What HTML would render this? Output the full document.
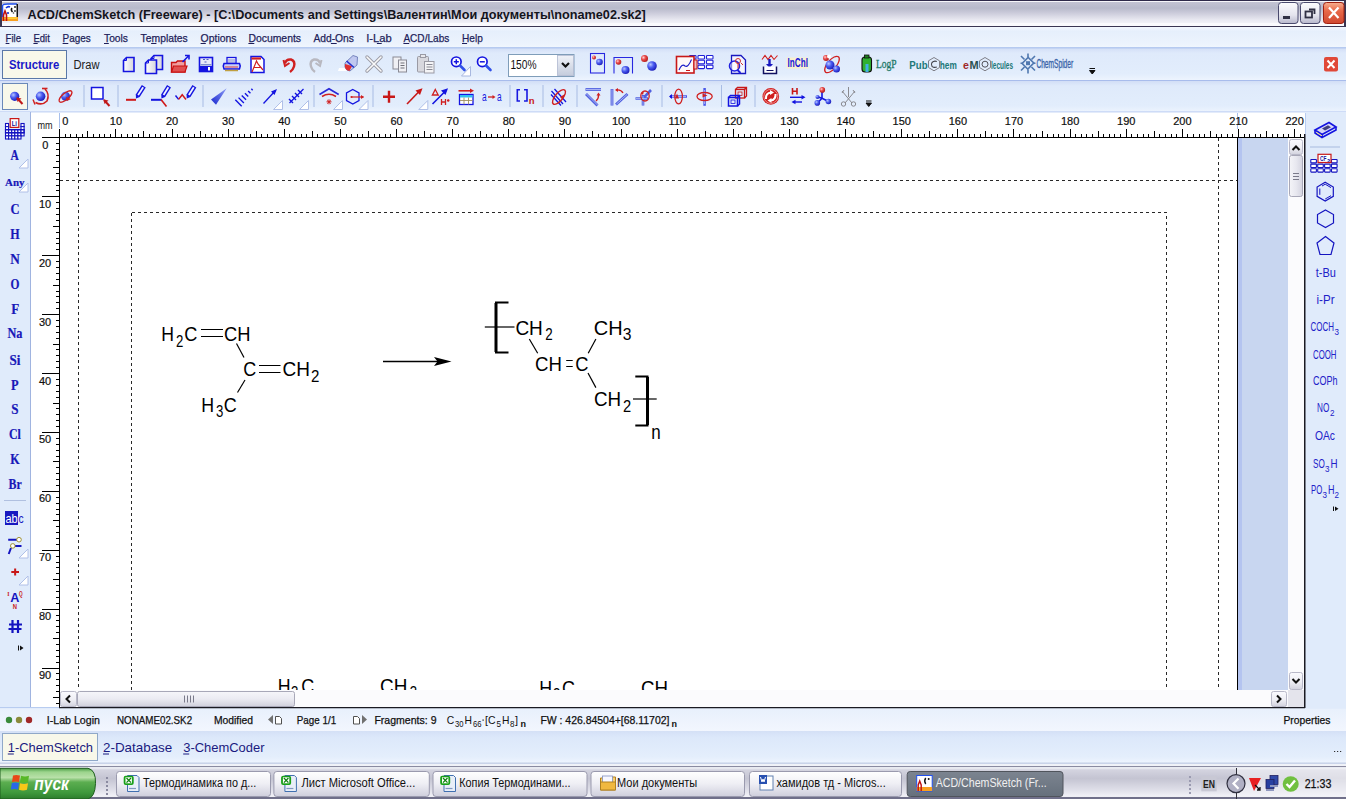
<!DOCTYPE html><html><head><meta charset="utf-8"><style>
*{margin:0;padding:0}
html,body{width:1346px;height:799px;overflow:hidden;background:#dce8fa}
svg{position:absolute;left:0;top:0;display:block}
text{white-space:pre}
</style></head><body>
<svg width="1346" height="799" viewBox="0 0 1346 799">
<defs>
<linearGradient id="gTitle" x1="0" y1="0" x2="0" y2="1">
 <stop offset="0" stop-color="#c6c6d6"/><stop offset="0.3" stop-color="#b8bacb"/><stop offset="0.45" stop-color="#c8c8d8"/><stop offset="0.75" stop-color="#eaeaf2"/><stop offset="1" stop-color="#fcfcfe"/>
</linearGradient>
<linearGradient id="gMenu" x1="0" y1="0" x2="0" y2="1">
 <stop offset="0" stop-color="#f4f8fe"/><stop offset="0.2" stop-color="#e6effc"/><stop offset="0.8" stop-color="#ecf3fd"/><stop offset="1" stop-color="#f2f7fe"/>
</linearGradient>
<linearGradient id="gTb" x1="0" y1="0" x2="0" y2="1">
 <stop offset="0" stop-color="#d2def6"/><stop offset="0.16" stop-color="#dfeafb"/><stop offset="0.8" stop-color="#e2edfc"/><stop offset="1" stop-color="#edf4fe"/>
</linearGradient>
<linearGradient id="gTask" x1="0" y1="0" x2="0" y2="1">
 <stop offset="0" stop-color="#fafafc"/><stop offset="0.08" stop-color="#d4d4e0"/><stop offset="0.35" stop-color="#c4c4d2"/><stop offset="0.7" stop-color="#dedee8"/><stop offset="0.9" stop-color="#f0f0f6"/><stop offset="1" stop-color="#e8e8f0"/>
</linearGradient>
<linearGradient id="gBtn" x1="0" y1="0" x2="0" y2="1">
 <stop offset="0" stop-color="#ffffff"/><stop offset="0.5" stop-color="#eeeef4"/><stop offset="1" stop-color="#cfcfdc"/>
</linearGradient>
<linearGradient id="gStart" x1="0" y1="0" x2="0" y2="1">
 <stop offset="0" stop-color="#4a9c44"/><stop offset="0.12" stop-color="#9cd48c"/><stop offset="0.3" stop-color="#b8e0a8"/><stop offset="0.45" stop-color="#5cae50"/><stop offset="0.8" stop-color="#3e983c"/><stop offset="1" stop-color="#2c7c2c"/>
</linearGradient>
<linearGradient id="gThumbV" x1="0" y1="0" x2="1" y2="0">
 <stop offset="0" stop-color="#f4f4f8"/><stop offset="0.5" stop-color="#e8e8f0"/><stop offset="1" stop-color="#d4d4e0"/>
</linearGradient>
<linearGradient id="gThumbH" x1="0" y1="0" x2="0" y2="1">
 <stop offset="0" stop-color="#f6f6fa"/><stop offset="0.5" stop-color="#ebebf2"/><stop offset="1" stop-color="#d0d0dc"/>
</linearGradient>
<linearGradient id="gSbBtn" x1="0" y1="0" x2="0" y2="1">
 <stop offset="0" stop-color="#fafafe"/><stop offset="0.55" stop-color="#eeeef4"/><stop offset="1" stop-color="#d2d2de"/>
</linearGradient>
<linearGradient id="gStatus" x1="0" y1="0" x2="0" y2="1">
 <stop offset="0" stop-color="#e8f0fc"/><stop offset="1" stop-color="#f2f6fe"/>
</linearGradient>
<linearGradient id="gTabs" x1="0" y1="0" x2="0" y2="1">
 <stop offset="0" stop-color="#d4e0f6"/><stop offset="0.2" stop-color="#dce8fa"/><stop offset="0.8" stop-color="#e4eefc"/><stop offset="1" stop-color="#eef4fe"/>
</linearGradient>
<linearGradient id="gActive" x1="0" y1="0" x2="0" y2="1">
 <stop offset="0" stop-color="#7c8490"/><stop offset="1" stop-color="#66707c"/>
</linearGradient>
</defs>
<rect x="0" y="0" width="1346" height="27" fill="url(#gTitle)"/>
<rect x="0" y="0" width="1346" height="1" fill="#2e2a4a"/>
<rect x="0" y="1" width="1346" height="1" fill="#f6f6fa"/>
<rect x="0" y="23" width="1346" height="3" fill="#fafafd"/>
<rect x="0" y="26" width="1346" height="1" fill="#3a3652"/>
<rect x="0" y="0" width="2" height="27" fill="#3a3652"/>
<rect x="1344" y="0" width="2" height="27" fill="#3a3652"/>
<text x="27.50" y="19.00" font-family="Liberation Sans" font-size="13" font-weight="bold" font-style="normal" fill="#14141c" textLength="618.32" lengthAdjust="spacingAndGlyphs">ACD/ChemSketch (Freeware) - [C:\Documents and Settings\Валентин\Мои документы\noname02.sk2]</text>
<rect x="0" y="27" width="1346" height="21" fill="url(#gMenu)"/>
<rect x="0" y="47" width="1346" height="1" fill="#b8ccf0"/>
<text x="5.60" y="42.00" font-family="Liberation Sans" font-size="11.5" font-weight="normal" font-style="normal" fill="#1e1e5a" textLength="15.53" lengthAdjust="spacingAndGlyphs" stroke="#1e1e5a" stroke-width="0.25">File</text>
<text x="33.40" y="42.00" font-family="Liberation Sans" font-size="11.5" font-weight="normal" font-style="normal" fill="#1e1e5a" textLength="16.43" lengthAdjust="spacingAndGlyphs" stroke="#1e1e5a" stroke-width="0.25">Edit</text>
<text x="62.60" y="42.00" font-family="Liberation Sans" font-size="11.5" font-weight="normal" font-style="normal" fill="#1e1e5a" textLength="28.18" lengthAdjust="spacingAndGlyphs" stroke="#1e1e5a" stroke-width="0.25">Pages</text>
<text x="104.00" y="42.00" font-family="Liberation Sans" font-size="11.5" font-weight="normal" font-style="normal" fill="#1e1e5a" textLength="23.98" lengthAdjust="spacingAndGlyphs" stroke="#1e1e5a" stroke-width="0.25">Tools</text>
<text x="140.60" y="42.00" font-family="Liberation Sans" font-size="11.5" font-weight="normal" font-style="normal" fill="#1e1e5a" textLength="47.17" lengthAdjust="spacingAndGlyphs" stroke="#1e1e5a" stroke-width="0.25">Templates</text>
<text x="200.60" y="42.00" font-family="Liberation Sans" font-size="11.5" font-weight="normal" font-style="normal" fill="#1e1e5a" textLength="35.97" lengthAdjust="spacingAndGlyphs" stroke="#1e1e5a" stroke-width="0.25">Options</text>
<text x="248.40" y="42.00" font-family="Liberation Sans" font-size="11.5" font-weight="normal" font-style="normal" fill="#1e1e5a" textLength="52.67" lengthAdjust="spacingAndGlyphs" stroke="#1e1e5a" stroke-width="0.25">Documents</text>
<text x="313.40" y="42.00" font-family="Liberation Sans" font-size="11.5" font-weight="normal" font-style="normal" fill="#1e1e5a" textLength="40.58" lengthAdjust="spacingAndGlyphs" stroke="#1e1e5a" stroke-width="0.25">Add-Ons</text>
<text x="366.22" y="42.00" font-family="Liberation Sans" font-size="11.5" font-weight="normal" font-style="normal" fill="#1e1e5a" textLength="25.56" lengthAdjust="spacingAndGlyphs" stroke="#1e1e5a" stroke-width="0.25">I-Lab</text>
<text x="403.40" y="42.00" font-family="Liberation Sans" font-size="11.5" font-weight="normal" font-style="normal" fill="#1e1e5a" textLength="45.88" lengthAdjust="spacingAndGlyphs" stroke="#1e1e5a" stroke-width="0.25">ACD/Labs</text>
<text x="462.00" y="42.00" font-family="Liberation Sans" font-size="11.5" font-weight="normal" font-style="normal" fill="#1e1e5a" textLength="20.75" lengthAdjust="spacingAndGlyphs" stroke="#1e1e5a" stroke-width="0.25">Help</text>
<rect x="5.6" y="43" width="3.8" height="1" fill="#1e1e5a"/>
<rect x="33.4" y="43" width="4.3" height="1" fill="#1e1e5a"/>
<rect x="62.6" y="43" width="5.7" height="1" fill="#1e1e5a"/>
<rect x="104.0" y="43" width="4.8" height="1" fill="#1e1e5a"/>
<rect x="151.1" y="43" width="5.3" height="1" fill="#1e1e5a"/>
<rect x="200.6" y="43" width="5.2" height="1" fill="#1e1e5a"/>
<rect x="248.4" y="43" width="5.9" height="1" fill="#1e1e5a"/>
<rect x="330.9" y="43" width="5.8" height="1" fill="#1e1e5a"/>
<rect x="376.9" y="43" width="4.8" height="1" fill="#1e1e5a"/>
<rect x="403.4" y="43" width="5.8" height="1" fill="#1e1e5a"/>
<rect x="462.0" y="43" width="5.1" height="1" fill="#1e1e5a"/>
<rect x="0" y="48" width="1346" height="32" fill="url(#gTb)"/>
<rect x="0" y="47.5" width="1346" height="1" fill="#b4c8f0"/>
<rect x="0" y="80" width="1346" height="1" fill="#a8bcec"/>
<rect x="0" y="81" width="1346" height="31" fill="url(#gTb)"/>
<rect x="0" y="111.5" width="1346" height="1" fill="#b0c4f0"/>
<rect x="2.5" y="50.5" width="64" height="28" fill="#f8f8ea" stroke="#5a78a8" stroke-width="1"/>
<text x="9.00" y="68.60" font-family="Liberation Sans" font-size="12" font-weight="bold" font-style="normal" fill="#1818c8" textLength="50.29" lengthAdjust="spacingAndGlyphs">Structure</text>
<text x="73.50" y="68.60" font-family="Liberation Sans" font-size="12" font-weight="normal" font-style="normal" fill="#202020" textLength="25.99" lengthAdjust="spacingAndGlyphs">Draw</text>
<rect x="2.5" y="83.5" width="25" height="26" fill="#f8f8ea" stroke="#6a88b8" stroke-width="1"/>
<rect x="0" y="112" width="30" height="595" fill="#e0ebfb"/>
<rect x="30" y="112" width="1" height="596" fill="#a0b4e0"/>
<rect x="1305" y="112" width="41" height="596" fill="#e0ebfb"/>
<rect x="31" y="112.5" width="1274" height="25" fill="#ffffff"/>
<rect x="31" y="137" width="28" height="570" fill="#ffffff"/>
<rect x="59" y="113" width="1" height="15" fill="#a8c0ec"/>
<rect x="1237" y="113" width="1" height="16" fill="#a8c0ec"/>
<text x="37.50" y="128.50" font-family="Liberation Sans" font-size="11" font-weight="normal" font-style="normal" fill="#202020" textLength="15.13" lengthAdjust="spacingAndGlyphs">mm</text>
<text x="62.30" y="125.00" font-family="Liberation Sans" font-size="11" font-weight="normal" font-style="normal" fill="#101010" stroke="#101010" stroke-width="0.2">0</text>
<text x="109.77" y="125.00" font-family="Liberation Sans" font-size="11" font-weight="normal" font-style="normal" fill="#101010" stroke="#101010" stroke-width="0.2">10</text>
<text x="165.90" y="125.00" font-family="Liberation Sans" font-size="11" font-weight="normal" font-style="normal" fill="#101010" stroke="#101010" stroke-width="0.2">20</text>
<text x="222.03" y="125.00" font-family="Liberation Sans" font-size="11" font-weight="normal" font-style="normal" fill="#101010" stroke="#101010" stroke-width="0.2">30</text>
<text x="278.16" y="125.00" font-family="Liberation Sans" font-size="11" font-weight="normal" font-style="normal" fill="#101010" stroke="#101010" stroke-width="0.2">40</text>
<text x="334.29" y="125.00" font-family="Liberation Sans" font-size="11" font-weight="normal" font-style="normal" fill="#101010" stroke="#101010" stroke-width="0.2">50</text>
<text x="390.42" y="125.00" font-family="Liberation Sans" font-size="11" font-weight="normal" font-style="normal" fill="#101010" stroke="#101010" stroke-width="0.2">60</text>
<text x="446.55" y="125.00" font-family="Liberation Sans" font-size="11" font-weight="normal" font-style="normal" fill="#101010" stroke="#101010" stroke-width="0.2">70</text>
<text x="502.68" y="125.00" font-family="Liberation Sans" font-size="11" font-weight="normal" font-style="normal" fill="#101010" stroke="#101010" stroke-width="0.2">80</text>
<text x="558.81" y="125.00" font-family="Liberation Sans" font-size="11" font-weight="normal" font-style="normal" fill="#101010" stroke="#101010" stroke-width="0.2">90</text>
<text x="611.88" y="125.00" font-family="Liberation Sans" font-size="11" font-weight="normal" font-style="normal" fill="#101010" stroke="#101010" stroke-width="0.2">100</text>
<text x="668.42" y="125.00" font-family="Liberation Sans" font-size="11" font-weight="normal" font-style="normal" fill="#101010" stroke="#101010" stroke-width="0.2">110</text>
<text x="724.14" y="125.00" font-family="Liberation Sans" font-size="11" font-weight="normal" font-style="normal" fill="#101010" stroke="#101010" stroke-width="0.2">120</text>
<text x="780.27" y="125.00" font-family="Liberation Sans" font-size="11" font-weight="normal" font-style="normal" fill="#101010" stroke="#101010" stroke-width="0.2">130</text>
<text x="836.40" y="125.00" font-family="Liberation Sans" font-size="11" font-weight="normal" font-style="normal" fill="#101010" stroke="#101010" stroke-width="0.2">140</text>
<text x="892.53" y="125.00" font-family="Liberation Sans" font-size="11" font-weight="normal" font-style="normal" fill="#101010" stroke="#101010" stroke-width="0.2">150</text>
<text x="948.66" y="125.00" font-family="Liberation Sans" font-size="11" font-weight="normal" font-style="normal" fill="#101010" stroke="#101010" stroke-width="0.2">160</text>
<text x="1004.79" y="125.00" font-family="Liberation Sans" font-size="11" font-weight="normal" font-style="normal" fill="#101010" stroke="#101010" stroke-width="0.2">170</text>
<text x="1060.92" y="125.00" font-family="Liberation Sans" font-size="11" font-weight="normal" font-style="normal" fill="#101010" stroke="#101010" stroke-width="0.2">180</text>
<text x="1117.05" y="125.00" font-family="Liberation Sans" font-size="11" font-weight="normal" font-style="normal" fill="#101010" stroke="#101010" stroke-width="0.2">190</text>
<text x="1173.18" y="125.00" font-family="Liberation Sans" font-size="11" font-weight="normal" font-style="normal" fill="#101010" stroke="#101010" stroke-width="0.2">200</text>
<text x="1229.31" y="125.00" font-family="Liberation Sans" font-size="11" font-weight="normal" font-style="normal" fill="#101010" stroke="#101010" stroke-width="0.2">210</text>
<text x="1285.44" y="125.00" font-family="Liberation Sans" font-size="11" font-weight="normal" font-style="normal" fill="#101010" stroke="#101010" stroke-width="0.2">220</text>
<path d="M59.7 129V137 M65.3 134V137 M70.9 134V137 M76.5 134V137 M82.2 134V137 M87.8 131V137 M93.4 134V137 M99.0 134V137 M104.6 134V137 M110.2 134V137 M115.8 129V137 M121.4 134V137 M127.1 134V137 M132.7 134V137 M138.3 134V137 M143.9 131V137 M149.5 134V137 M155.1 134V137 M160.7 134V137 M166.3 134V137 M172.0 129V137 M177.6 134V137 M183.2 134V137 M188.8 134V137 M194.4 134V137 M200.0 131V137 M205.6 134V137 M211.3 134V137 M216.9 134V137 M222.5 134V137 M228.1 129V137 M233.7 134V137 M239.3 134V137 M244.9 134V137 M250.5 134V137 M256.2 131V137 M261.8 134V137 M267.4 134V137 M273.0 134V137 M278.6 134V137 M284.2 129V137 M289.8 134V137 M295.4 134V137 M301.1 134V137 M306.7 134V137 M312.3 131V137 M317.9 134V137 M323.5 134V137 M329.1 134V137 M334.7 134V137 M340.4 129V137 M346.0 134V137 M351.6 134V137 M357.2 134V137 M362.8 134V137 M368.4 131V137 M374.0 134V137 M379.6 134V137 M385.3 134V137 M390.9 134V137 M396.5 129V137 M402.1 134V137 M407.7 134V137 M413.3 134V137 M418.9 134V137 M424.5 131V137 M430.2 134V137 M435.8 134V137 M441.4 134V137 M447.0 134V137 M452.6 129V137 M458.2 134V137 M463.8 134V137 M469.4 134V137 M475.1 134V137 M480.7 131V137 M486.3 134V137 M491.9 134V137 M497.5 134V137 M503.1 134V137 M508.7 129V137 M514.4 134V137 M520.0 134V137 M525.6 134V137 M531.2 134V137 M536.8 131V137 M542.4 134V137 M548.0 134V137 M553.6 134V137 M559.3 134V137 M564.9 129V137 M570.5 134V137 M576.1 134V137 M581.7 134V137 M587.3 134V137 M592.9 131V137 M598.5 134V137 M604.2 134V137 M609.8 134V137 M615.4 134V137 M621.0 129V137 M626.6 134V137 M632.2 134V137 M637.8 134V137 M643.5 134V137 M649.1 131V137 M654.7 134V137 M660.3 134V137 M665.9 134V137 M671.5 134V137 M677.1 129V137 M682.7 134V137 M688.4 134V137 M694.0 134V137 M699.6 134V137 M705.2 131V137 M710.8 134V137 M716.4 134V137 M722.0 134V137 M727.6 134V137 M733.3 129V137 M738.9 134V137 M744.5 134V137 M750.1 134V137 M755.7 134V137 M761.3 131V137 M766.9 134V137 M772.6 134V137 M778.2 134V137 M783.8 134V137 M789.4 129V137 M795.0 134V137 M800.6 134V137 M806.2 134V137 M811.8 134V137 M817.5 131V137 M823.1 134V137 M828.7 134V137 M834.3 134V137 M839.9 134V137 M845.5 129V137 M851.1 134V137 M856.7 134V137 M862.4 134V137 M868.0 134V137 M873.6 131V137 M879.2 134V137 M884.8 134V137 M890.4 134V137 M896.0 134V137 M901.7 129V137 M907.3 134V137 M912.9 134V137 M918.5 134V137 M924.1 134V137 M929.7 131V137 M935.3 134V137 M940.9 134V137 M946.6 134V137 M952.2 134V137 M957.8 129V137 M963.4 134V137 M969.0 134V137 M974.6 134V137 M980.2 134V137 M985.8 131V137 M991.5 134V137 M997.1 134V137 M1002.7 134V137 M1008.3 134V137 M1013.9 129V137 M1019.5 134V137 M1025.1 134V137 M1030.7 134V137 M1036.4 134V137 M1042.0 131V137 M1047.6 134V137 M1053.2 134V137 M1058.8 134V137 M1064.4 134V137 M1070.0 129V137 M1075.7 134V137 M1081.3 134V137 M1086.9 134V137 M1092.5 134V137 M1098.1 131V137 M1103.7 134V137 M1109.3 134V137 M1114.9 134V137 M1120.6 134V137 M1126.2 129V137 M1131.8 134V137 M1137.4 134V137 M1143.0 134V137 M1148.6 134V137 M1154.2 131V137 M1159.8 134V137 M1165.5 134V137 M1171.1 134V137 M1176.7 134V137 M1182.3 129V137 M1187.9 134V137 M1193.5 134V137 M1199.1 134V137 M1204.8 134V137 M1210.4 131V137 M1216.0 134V137 M1221.6 134V137 M1227.2 134V137 M1232.8 134V137 M1238.4 129V137 M1244.0 134V137 M1249.7 134V137 M1255.3 134V137 M1260.9 134V137 M1266.5 131V137 M1272.1 134V137 M1277.7 134V137 M1283.3 134V137 M1288.9 134V137 M1294.6 129V137 M1300.2 134V137" stroke="#000" stroke-width="1" fill="none" shape-rendering="crispEdges"/>
<rect x="42" y="137" width="1263" height="1" fill="#000"/>
<rect x="59" y="129" width="1" height="578" fill="#000"/>
<text x="42.30" y="149.00" font-family="Liberation Sans" font-size="11" font-weight="normal" font-style="normal" fill="#101010" stroke="#101010" stroke-width="0.2">0</text>
<text x="39.00" y="207.80" font-family="Liberation Sans" font-size="11" font-weight="normal" font-style="normal" fill="#101010" stroke="#101010" stroke-width="0.2">10</text>
<text x="39.00" y="266.70" font-family="Liberation Sans" font-size="11" font-weight="normal" font-style="normal" fill="#101010" stroke="#101010" stroke-width="0.2">20</text>
<text x="39.00" y="325.60" font-family="Liberation Sans" font-size="11" font-weight="normal" font-style="normal" fill="#101010" stroke="#101010" stroke-width="0.2">30</text>
<text x="39.00" y="384.50" font-family="Liberation Sans" font-size="11" font-weight="normal" font-style="normal" fill="#101010" stroke="#101010" stroke-width="0.2">40</text>
<text x="39.00" y="443.40" font-family="Liberation Sans" font-size="11" font-weight="normal" font-style="normal" fill="#101010" stroke="#101010" stroke-width="0.2">50</text>
<text x="39.00" y="502.30" font-family="Liberation Sans" font-size="11" font-weight="normal" font-style="normal" fill="#101010" stroke="#101010" stroke-width="0.2">60</text>
<text x="39.00" y="561.20" font-family="Liberation Sans" font-size="11" font-weight="normal" font-style="normal" fill="#101010" stroke="#101010" stroke-width="0.2">70</text>
<text x="39.00" y="620.10" font-family="Liberation Sans" font-size="11" font-weight="normal" font-style="normal" fill="#101010" stroke="#101010" stroke-width="0.2">80</text>
<text x="39.00" y="679.00" font-family="Liberation Sans" font-size="11" font-weight="normal" font-style="normal" fill="#101010" stroke="#101010" stroke-width="0.2">90</text>
<path d="M42 137.9H59 M56 143.8H59 M56 149.7H59 M56 155.6H59 M56 161.5H59 M53 167.3H59 M56 173.2H59 M56 179.1H59 M56 185.0H59 M56 190.9H59 M42 196.8H59 M56 202.7H59 M56 208.6H59 M56 214.5H59 M56 220.4H59 M53 226.2H59 M56 232.1H59 M56 238.0H59 M56 243.9H59 M56 249.8H59 M42 255.7H59 M56 261.6H59 M56 267.5H59 M56 273.4H59 M56 279.3H59 M53 285.1H59 M56 291.0H59 M56 296.9H59 M56 302.8H59 M56 308.7H59 M42 314.6H59 M56 320.5H59 M56 326.4H59 M56 332.3H59 M56 338.2H59 M53 344.0H59 M56 349.9H59 M56 355.8H59 M56 361.7H59 M56 367.6H59 M42 373.5H59 M56 379.4H59 M56 385.3H59 M56 391.2H59 M56 397.1H59 M53 403.0H59 M56 408.8H59 M56 414.7H59 M56 420.6H59 M56 426.5H59 M42 432.4H59 M56 438.3H59 M56 444.2H59 M56 450.1H59 M56 456.0H59 M53 461.9H59 M56 467.7H59 M56 473.6H59 M56 479.5H59 M56 485.4H59 M42 491.3H59 M56 497.2H59 M56 503.1H59 M56 509.0H59 M56 514.9H59 M53 520.8H59 M56 526.6H59 M56 532.5H59 M56 538.4H59 M56 544.3H59 M42 550.2H59 M56 556.1H59 M56 562.0H59 M56 567.9H59 M56 573.8H59 M53 579.6H59 M56 585.5H59 M56 591.4H59 M56 597.3H59 M56 603.2H59 M42 609.1H59 M56 615.0H59 M56 620.9H59 M56 626.8H59 M56 632.7H59 M53 638.5H59 M56 644.4H59 M56 650.3H59 M56 656.2H59 M56 662.1H59 M42 668.0H59 M56 673.9H59 M56 679.8H59 M56 685.7H59 M56 691.6H59 M53 697.4H59 M56 703.3H59" stroke="#000" stroke-width="1" fill="none" shape-rendering="crispEdges"/>
<rect x="60" y="138" width="1177" height="552" fill="#ffffff"/>
<rect x="1237" y="138" width="1" height="552" fill="#000"/>
<rect x="1238" y="138" width="4" height="552" fill="#b4c4f0"/>
<rect x="1242" y="138" width="46" height="552" fill="#c8d6f0"/>
<g stroke="#282828" stroke-width="1" fill="none" stroke-dasharray="3 3" shape-rendering="crispEdges">
<path d="M78.5 138V690"/>
<path d="M1218.5 138V690"/>
<path d="M60 180.5H1237"/>
<path d="M131.5 212.5H1166.5V690"/>
<path d="M131.5 212.5V690"/>
</g>
<rect x="1288" y="138" width="16" height="552" fill="#fbfbfd"/>
<rect x="1289.5" y="139.5" width="13" height="15" rx="2" fill="url(#gSbBtn)" stroke="#b8b8c8"/>
<path d="M1292.5 150L1296 146.5L1299.5 150" stroke="#101010" stroke-width="2" fill="none"/>
<rect x="1289.5" y="155.5" width="13" height="41" rx="2" fill="url(#gThumbV)" stroke="#a8a8b8"/>
<path d="M1293 173.5H1299M1293 176.5H1299M1293 179.5H1299" stroke="#7a7a8a" stroke-width="1"/>
<rect x="1289.5" y="672.5" width="13" height="17" rx="2" fill="url(#gSbBtn)" stroke="#b8b8c8"/>
<path d="M1292.5 679L1296 682.5L1299.5 679" stroke="#101010" stroke-width="2" fill="none"/>
<rect x="60" y="690" width="1228" height="17" fill="#fbfbfd"/>
<rect x="60.5" y="691.5" width="16" height="15" rx="2" fill="url(#gSbBtn)" stroke="#b8b8c8"/>
<path d="M70 695.5L66.5 699L70 702.5" stroke="#101010" stroke-width="2" fill="none"/>
<rect x="77.5" y="691.5" width="217" height="15" rx="2" fill="url(#gThumbH)" stroke="#a8a8b8"/>
<path d="M184.5 695.5V702.5M187.5 695.5V702.5M190.5 695.5V702.5M193.5 695.5V702.5" stroke="#7a7a8a" stroke-width="1"/>
<rect x="1271.5" y="691.5" width="15" height="15" rx="2" fill="url(#gSbBtn)" stroke="#b8b8c8"/>
<path d="M1277 695.5L1280.5 699L1277 702.5" stroke="#101010" stroke-width="2" fill="none"/>
<rect x="1288" y="690" width="16" height="17" fill="#e4e4ec"/>
<rect x="59" y="707" width="1246" height="1.5" fill="#1a1a22"/>
<rect x="0" y="707" width="59" height="1" fill="#b8ccf0"/>
<rect x="1304" y="134" width="1.5" height="574" fill="#1a1a22"/>
<rect x="1305" y="113" width="1" height="21" fill="#b8ccf0"/>
<rect x="0" y="708.5" width="1346" height="22.5" fill="url(#gStatus)"/>
<circle cx="9" cy="720" r="3.2" fill="#3a8a3a"/>
<circle cx="19" cy="720" r="3.2" fill="#8a8a3a"/>
<circle cx="29" cy="720" r="3.2" fill="#a02828"/>
<text x="46.84" y="723.80" font-family="Liberation Sans" font-size="11" font-weight="normal" font-style="normal" fill="#101010" textLength="53.08" lengthAdjust="spacingAndGlyphs" stroke="#101010" stroke-width="0.25">I-Lab Login</text>
<text x="117.00" y="723.80" font-family="Liberation Sans" font-size="11" font-weight="normal" font-style="normal" fill="#101010" textLength="75.10" lengthAdjust="spacingAndGlyphs" stroke="#101010" stroke-width="0.25">NONAME02.SK2</text>
<text x="213.90" y="723.80" font-family="Liberation Sans" font-size="11" font-weight="normal" font-style="normal" fill="#101010" textLength="39.11" lengthAdjust="spacingAndGlyphs" stroke="#101010" stroke-width="0.25">Modified</text>
<path d="M273 715L268 719.5L273 724Z" fill="#707070"/><path d="M275.5 716.5H279.5L281.5 718.5V724H275.5Z" fill="#fff" stroke="#505050"/>
<text x="296.80" y="724.00" font-family="Liberation Sans" font-size="11" font-weight="normal" font-style="normal" fill="#101010" textLength="39.31" lengthAdjust="spacingAndGlyphs" stroke="#101010" stroke-width="0.25">Page 1/1</text>
<path d="M353.5 716.5H357.5L359.5 718.5V724H353.5Z" fill="#fff" stroke="#505050"/><path d="M362 715L367 719.5L362 724Z" fill="#707070"/>
<text x="374.40" y="724.00" font-family="Liberation Sans" font-size="11" font-weight="normal" font-style="normal" fill="#101010" textLength="62.11" lengthAdjust="spacingAndGlyphs" stroke="#101010" stroke-width="0.25">Fragments: 9</text>
<text x="1283.40" y="723.70" font-family="Liberation Sans" font-size="11" font-weight="normal" font-style="normal" fill="#101010" textLength="47.13" lengthAdjust="spacingAndGlyphs" stroke="#101010" stroke-width="0.25">Properties</text>
<rect x="0" y="731" width="1346" height="32" fill="url(#gTabs)"/>
<rect x="0" y="762.7" width="1346" height="1" fill="#a8b8d8"/>
<rect x="0" y="763.7" width="1346" height="2.5" fill="#f0f2f8"/>
<rect x="0" y="766" width="1346" height="1.3" fill="#8a8aa0"/>
<rect x="2.5" y="733.5" width="95" height="27" fill="#f8f8ea" stroke="#90a8c8"/>
<text x="7.80" y="751.70" font-family="Liberation Sans" font-size="13" font-weight="normal" font-style="normal" fill="#1a1a80" textLength="85.23" lengthAdjust="spacingAndGlyphs">1-ChemSketch</text>
<text x="103.00" y="751.70" font-family="Liberation Sans" font-size="13" font-weight="normal" font-style="normal" fill="#1a1a80" textLength="69.24" lengthAdjust="spacingAndGlyphs">2-Database</text>
<text x="183.20" y="751.70" font-family="Liberation Sans" font-size="13" font-weight="normal" font-style="normal" fill="#1a1a80" textLength="81.33" lengthAdjust="spacingAndGlyphs">3-ChemCoder</text>
<rect x="7.8" y="753.5" width="6" height="1" fill="#1a1a80"/><rect x="103" y="753.5" width="6" height="1" fill="#1a1a80"/><rect x="183.2" y="753.5" width="6" height="1" fill="#1a1a80"/>
<path d="M1334 751.5h1.2M1337 751.5h1.2M1340 751.5h1.2" stroke="#303030" stroke-width="1.2"/>
<rect x="0" y="767.3" width="1346" height="31.7" fill="url(#gTask)"/>
<rect x="0" y="797" width="1346" height="2" fill="#70708a"/>
<rect x="1236.5" y="768" width="110" height="29" fill="#f4f4f8" opacity="0.55"/>
<rect x="1236" y="768" width="1" height="31" fill="#30303a"/>
<path d="M0 768.3H88Q96 770 95.5 783.5Q95 797 88 799H0Z" fill="url(#gStart)" stroke="#1e5e1e" stroke-width="1"/>
<text x="34.30" y="790.00" font-family="Liberation Sans" font-size="19" font-weight="bold" font-style="italic" fill="#ffffff" textLength="34.58" lengthAdjust="spacingAndGlyphs">пуск</text>
<rect x="106" y="777" width="2" height="2" fill="#8a8aa0"/>
<rect x="106" y="781" width="2" height="2" fill="#8a8aa0"/>
<rect x="106" y="785" width="2" height="2" fill="#8a8aa0"/>
<rect x="106" y="789" width="2" height="2" fill="#8a8aa0"/>
<rect x="106" y="793" width="2" height="2" fill="#8a8aa0"/>
<rect x="116.5" y="771.5" width="154" height="25" rx="3" fill="url(#gBtn)" stroke="#9a9aae"/>
<text x="143.00" y="787.30" font-family="Liberation Sans" font-size="12" font-weight="normal" font-style="normal" fill="#101010" textLength="113.30" lengthAdjust="spacingAndGlyphs">Термодинамика по д...</text>
<rect x="273.9" y="771.5" width="155.40000000000003" height="25" rx="3" fill="url(#gBtn)" stroke="#9a9aae"/>
<text x="301.40" y="787.30" font-family="Liberation Sans" font-size="12" font-weight="normal" font-style="normal" fill="#101010" textLength="113.91" lengthAdjust="spacingAndGlyphs">Лист Microsoft Office...</text>
<rect x="433.0" y="771.5" width="154.0" height="25" rx="3" fill="url(#gBtn)" stroke="#9a9aae"/>
<text x="459.20" y="787.30" font-family="Liberation Sans" font-size="12" font-weight="normal" font-style="normal" fill="#101010" textLength="111.30" lengthAdjust="spacingAndGlyphs">Копия Термодинами...</text>
<rect x="591.0" y="771.5" width="153.5" height="25" rx="3" fill="url(#gBtn)" stroke="#9a9aae"/>
<text x="617.00" y="787.30" font-family="Liberation Sans" font-size="12" font-weight="normal" font-style="normal" fill="#101010" textLength="80.27" lengthAdjust="spacingAndGlyphs">Мои документы</text>
<rect x="749.5" y="771.5" width="152" height="25" rx="3" fill="url(#gBtn)" stroke="#9a9aae"/>
<text x="776.40" y="787.30" font-family="Liberation Sans" font-size="12" font-weight="normal" font-style="normal" fill="#101010" textLength="109.31" lengthAdjust="spacingAndGlyphs">хамидов тд - Micros...</text>
<rect x="907.2" y="771.5" width="155.79999999999995" height="25" rx="3" fill="url(#gActive)" stroke="#50545c"/>
<text x="935.70" y="787.30" font-family="Liberation Sans" font-size="12" font-weight="normal" font-style="normal" fill="#f0f0f0" textLength="111.00" lengthAdjust="spacingAndGlyphs">ACD/ChemSketch (Fr...</text>
<text x="1304.70" y="787.60" font-family="Liberation Sans" font-size="12" font-weight="normal" font-style="normal" fill="#101010" textLength="26.71" lengthAdjust="spacingAndGlyphs" stroke="#101010" stroke-width="0.25">21:33</text>
<text x="161.16" y="340.70" font-family="Liberation Sans" font-size="21" font-weight="normal" font-style="normal" fill="#000" textLength="12.72" lengthAdjust="spacingAndGlyphs">H</text>
<text x="175.90" y="346.60" font-family="Liberation Sans" font-size="17" font-weight="normal" font-style="normal" fill="#000" textLength="7.35" lengthAdjust="spacingAndGlyphs">2</text>
<text x="184.14" y="340.70" font-family="Liberation Sans" font-size="21" font-weight="normal" font-style="normal" fill="#000" textLength="13.11" lengthAdjust="spacingAndGlyphs">C</text>
<path d="M201 329.5H223M201 336.5H223" stroke="#000" stroke-width="1.2"/>
<text x="223.93" y="340.70" font-family="Liberation Sans" font-size="21" font-weight="normal" font-style="normal" fill="#000" textLength="26.49" lengthAdjust="spacingAndGlyphs">CH</text>
<path d="M236.5 343.5L244 357.5" stroke="#000" stroke-width="1.2"/>
<text x="243.14" y="376.00" font-family="Liberation Sans" font-size="21" font-weight="normal" font-style="normal" fill="#000" textLength="13.00" lengthAdjust="spacingAndGlyphs">C</text>
<path d="M259 365.5H280.5M259 372.5H280.5" stroke="#000" stroke-width="1.2"/>
<text x="282.59" y="376.00" font-family="Liberation Sans" font-size="21" font-weight="normal" font-style="normal" fill="#000" textLength="27.46" lengthAdjust="spacingAndGlyphs">CH</text>
<text x="311.00" y="381.50" font-family="Liberation Sans" font-size="17" font-weight="normal" font-style="normal" fill="#000" textLength="8.40" lengthAdjust="spacingAndGlyphs">2</text>
<path d="M245 380L237.5 392.5" stroke="#000" stroke-width="1.2"/>
<text x="201.15" y="411.50" font-family="Liberation Sans" font-size="21" font-weight="normal" font-style="normal" fill="#000" textLength="12.83" lengthAdjust="spacingAndGlyphs">H</text>
<text x="216.00" y="416.50" font-family="Liberation Sans" font-size="17" font-weight="normal" font-style="normal" fill="#000" textLength="7.35" lengthAdjust="spacingAndGlyphs">3</text>
<text x="223.64" y="411.50" font-family="Liberation Sans" font-size="21" font-weight="normal" font-style="normal" fill="#000" textLength="13.00" lengthAdjust="spacingAndGlyphs">C</text>
<path d="M383 361.5H440" stroke="#000" stroke-width="1.5"/>
<path d="M451.5 361.5L434 357L437.5 361.5L434 366Z" fill="#000"/>
<path d="M508.5 302.5H496V352.5H508.5" stroke="#000" stroke-width="2" fill="none"/>
<path d="M496 303V352" stroke="#000" stroke-width="3"/>
<path d="M484.8 327H514.5" stroke="#000" stroke-width="1.2"/>
<text x="515.39" y="334.80" font-family="Liberation Sans" font-size="21" font-weight="normal" font-style="normal" fill="#000" textLength="27.46" lengthAdjust="spacingAndGlyphs">CH</text>
<text x="545.20" y="340.00" font-family="Liberation Sans" font-size="17" font-weight="normal" font-style="normal" fill="#000" textLength="7.46" lengthAdjust="spacingAndGlyphs">2</text>
<path d="M529.3 339L537.7 353.3" stroke="#000" stroke-width="1.2"/>
<text x="535.01" y="371.10" font-family="Liberation Sans" font-size="21" font-weight="normal" font-style="normal" fill="#000" textLength="26.92" lengthAdjust="spacingAndGlyphs">CH</text>
<path d="M566.2 360.5H572.7M566.2 366.5H572.7" stroke="#000" stroke-width="1.2"/>
<text x="575.13" y="371.10" font-family="Liberation Sans" font-size="21" font-weight="normal" font-style="normal" fill="#000" textLength="13.22" lengthAdjust="spacingAndGlyphs">C</text>
<path d="M588.2 353.3L595.9 339" stroke="#000" stroke-width="1.2"/>
<text x="593.75" y="334.80" font-family="Liberation Sans" font-size="21" font-weight="normal" font-style="normal" fill="#000" textLength="28.86" lengthAdjust="spacingAndGlyphs">CH</text>
<text x="622.70" y="340.00" font-family="Liberation Sans" font-size="17" font-weight="normal" font-style="normal" fill="#000" textLength="8.72" lengthAdjust="spacingAndGlyphs">3</text>
<path d="M588 373L595.9 387.6" stroke="#000" stroke-width="1.2"/>
<text x="593.91" y="406.20" font-family="Liberation Sans" font-size="21" font-weight="normal" font-style="normal" fill="#000" textLength="27.14" lengthAdjust="spacingAndGlyphs">CH</text>
<text x="623.00" y="411.80" font-family="Liberation Sans" font-size="17" font-weight="normal" font-style="normal" fill="#000" textLength="8.19" lengthAdjust="spacingAndGlyphs">2</text>
<path d="M633 399H656.7" stroke="#000" stroke-width="1.2"/>
<path d="M635.3 376.5H647.5V425.5H635.3" stroke="#000" stroke-width="2" fill="none"/>
<path d="M647.5 377V425" stroke="#000" stroke-width="3"/>
<text x="651.19" y="438.80" font-family="Liberation Sans" font-size="21" font-weight="normal" font-style="normal" fill="#000" textLength="9.46" lengthAdjust="spacingAndGlyphs">n</text>
<g clip-path="url(#clipC)">
<text x="277.85" y="692.50" font-family="Liberation Sans" font-size="21" font-weight="normal" font-style="normal" fill="#000" textLength="12.83" lengthAdjust="spacingAndGlyphs">H</text>
<text x="301.14" y="692.50" font-family="Liberation Sans" font-size="21" font-weight="normal" font-style="normal" fill="#000" textLength="13.00" lengthAdjust="spacingAndGlyphs">C</text>
<text x="291.00" y="698.00" font-family="Liberation Sans" font-size="17" font-weight="normal" font-style="normal" fill="#000" textLength="7.35" lengthAdjust="spacingAndGlyphs">3</text>
<text x="380.10" y="692.50" font-family="Liberation Sans" font-size="21" font-weight="normal" font-style="normal" fill="#000" textLength="27.35" lengthAdjust="spacingAndGlyphs">CH</text>
<text x="409.70" y="698.00" font-family="Liberation Sans" font-size="17" font-weight="normal" font-style="normal" fill="#000" textLength="7.35" lengthAdjust="spacingAndGlyphs">3</text>
<text x="539.15" y="694.50" font-family="Liberation Sans" font-size="21" font-weight="normal" font-style="normal" fill="#000" textLength="12.83" lengthAdjust="spacingAndGlyphs">H</text>
<text x="553.00" y="700.00" font-family="Liberation Sans" font-size="17" font-weight="normal" font-style="normal" fill="#000" textLength="7.35" lengthAdjust="spacingAndGlyphs">3</text>
<text x="561.94" y="694.50" font-family="Liberation Sans" font-size="21" font-weight="normal" font-style="normal" fill="#000" textLength="13.00" lengthAdjust="spacingAndGlyphs">C</text>
<text x="641.01" y="694.50" font-family="Liberation Sans" font-size="21" font-weight="normal" font-style="normal" fill="#000" textLength="27.03" lengthAdjust="spacingAndGlyphs">CH</text>
</g>
<clipPath id="clipC"><rect x="60" y="138" width="1177" height="552"/></clipPath>
<text x="446.80" y="724.00" font-family="Liberation Sans" font-size="11" font-weight="normal" font-style="normal" fill="#101010" textLength="7.45" lengthAdjust="spacingAndGlyphs">C</text>
<text x="455.00" y="726.50" font-family="Liberation Sans" font-size="9" font-weight="normal" font-style="normal" fill="#101010" textLength="8.50" lengthAdjust="spacingAndGlyphs">30</text>
<text x="464.50" y="724.00" font-family="Liberation Sans" font-size="11" font-weight="normal" font-style="normal" fill="#101010" textLength="7.45" lengthAdjust="spacingAndGlyphs">H</text>
<text x="473.00" y="726.50" font-family="Liberation Sans" font-size="9" font-weight="normal" font-style="normal" fill="#101010" textLength="8.50" lengthAdjust="spacingAndGlyphs">66</text>
<rect x="482.5" y="719.5" width="1.2" height="1.2" fill="#101010"/>
<text x="485.00" y="724.00" font-family="Liberation Sans" font-size="11" font-weight="normal" font-style="normal" fill="#101010" textLength="10.45" lengthAdjust="spacingAndGlyphs">[C</text>
<text x="496.50" y="726.50" font-family="Liberation Sans" font-size="9" font-weight="normal" font-style="normal" fill="#101010" textLength="4.50" lengthAdjust="spacingAndGlyphs">5</text>
<text x="502.00" y="724.00" font-family="Liberation Sans" font-size="11" font-weight="normal" font-style="normal" fill="#101010" textLength="7.45" lengthAdjust="spacingAndGlyphs">H</text>
<text x="510.00" y="726.50" font-family="Liberation Sans" font-size="9" font-weight="normal" font-style="normal" fill="#101010" textLength="4.50" lengthAdjust="spacingAndGlyphs">8</text>
<text x="515.00" y="724.00" font-family="Liberation Sans" font-size="11" font-weight="normal" font-style="normal" fill="#101010" textLength="3.06" lengthAdjust="spacingAndGlyphs">]</text>
<text x="520.50" y="727.00" font-family="Liberation Sans" font-size="9" font-weight="bold" font-style="normal" fill="#101010" textLength="5.50" lengthAdjust="spacingAndGlyphs">n</text>
<text x="540.40" y="724.00" font-family="Liberation Sans" font-size="11" font-weight="normal" font-style="normal" fill="#101010" textLength="129.05" lengthAdjust="spacingAndGlyphs" stroke="#101010" stroke-width="0.25">FW : 426.84504+[68.11702]</text>
<text x="671.50" y="727.00" font-family="Liberation Sans" font-size="9" font-weight="bold" font-style="normal" fill="#101010" textLength="5.50" lengthAdjust="spacingAndGlyphs">n</text>
<path d="M13 775.5Q16 774.5 20 775.5L19 782Q15.5 781 12 782Z" fill="#e84818"/><path d="M21 775.8Q25 777 29 775.8L28 782.3Q24 783.5 20 782.3Z" fill="#58b828"/><path d="M11.8 783Q15 782 19 783L18 789.5Q14.5 788.5 10.8 789.5Z" fill="#2868e8"/><path d="M20 783.3Q24 784.5 28 783.3L27 789.8Q23 791 19 789.8Z" fill="#f8c818"/>
<path d="M127.5 775.5H137L139 777.5V791.5H127.5Z" fill="#e8eef8" stroke="#4070b0"/><path d="M129 788.5H136" stroke="#8098c0" stroke-width="1.2"/><rect x="123.7" y="775.7" width="10" height="9.3" rx="2" fill="#18a018"/><rect x="125.5" y="777.3" width="6.4" height="6" fill="#ffffff"/><path d="M126.5 778L131 782.6M131 778L126.5 782.6" stroke="#108010" stroke-width="1.3"/>
<path d="M284.9 775.5H294.4L296.4 777.5V791.5H284.9Z" fill="#e8eef8" stroke="#4070b0"/><path d="M286.4 788.5H293.4" stroke="#8098c0" stroke-width="1.2"/><rect x="281.09999999999997" y="775.7" width="10" height="9.3" rx="2" fill="#18a018"/><rect x="282.9" y="777.3" width="6.4" height="6" fill="#ffffff"/><path d="M283.9 778L288.4 782.6M288.4 778L283.9 782.6" stroke="#108010" stroke-width="1.3"/>
<path d="M444.0 775.5H453.5L455.5 777.5V791.5H444.0Z" fill="#e8eef8" stroke="#4070b0"/><path d="M445.5 788.5H452.5" stroke="#8098c0" stroke-width="1.2"/><rect x="440.2" y="775.7" width="10" height="9.3" rx="2" fill="#18a018"/><rect x="442.0" y="777.3" width="6.4" height="6" fill="#ffffff"/><path d="M443.0 778L447.5 782.6M447.5 778L443.0 782.6" stroke="#108010" stroke-width="1.3"/>
<path d="M600.5 778H605.5L606.5 777H615.5V790H600.5Z" fill="#f8d070" stroke="#b08020"/><rect x="602.5" y="776" width="10" height="7" fill="#f8f8ff" stroke="#8090c0" stroke-width="0.8"/><path d="M600.5 782H615.5V790H600.5Z" fill="#f0b840" stroke="#b08020"/>
<rect x="760" y="776" width="13" height="14" fill="#ffffff" stroke="#6080b0"/><rect x="759" y="775" width="8" height="9" fill="#2850b0"/><path d="M760.5 777L762 782L763 779L764 782L765.5 777" stroke="#fff" stroke-width="1" fill="none"/>
<rect x="916.7" y="775.5" width="15.5" height="15.5" fill="#ffffff" stroke="#2050f0"/><rect x="916.7" y="787" width="15.5" height="4" fill="#f8a020"/><path d="M918.2 791V785L919.7 781L921.2 785V791" stroke="#c01010" stroke-width="1.4" fill="none"/><path d="M925.7 778Q923.7 781 925.7 784" stroke="#101010" stroke-width="1.4" fill="none"/><circle cx="928.7" cy="779" r="1" fill="#101010"/>
<rect x="1201.3" y="775.8" width="15.4" height="15.5" fill="#c8c8d4"/>
<text x="1203.00" y="787.50" font-family="Liberation Sans" font-size="11" font-weight="bold" font-style="normal" fill="#202020" textLength="11.96" lengthAdjust="spacingAndGlyphs">EN</text>
<rect x="1189" y="776" width="2" height="2" fill="#9a9ab0"/>
<rect x="1189" y="780" width="2" height="2" fill="#9a9ab0"/>
<rect x="1189" y="784" width="2" height="2" fill="#9a9ab0"/>
<rect x="1189" y="788" width="2" height="2" fill="#9a9ab0"/>
<rect x="1189" y="792" width="2" height="2" fill="#9a9ab0"/>
<circle cx="1236" cy="783.6" r="9" fill="#b0b0c4" stroke="#303040" stroke-width="1.2"/><path d="M1238.5 778.5L1233.5 783.6L1238.5 788.7" stroke="#ffffff" stroke-width="2.2" fill="none"/>
<path d="M1249 778H1261L1254 791Z" fill="#e82020"/><path d="M1255 785L1260 790M1257 790H1260V787" stroke="#101010" stroke-width="1.3" fill="none"/>
<rect x="1270" y="775.5" width="8" height="9" fill="#3048a8" stroke="#202060" stroke-width="0.8"/><rect x="1266" y="779.5" width="8" height="9" fill="#2840a0" stroke="#202060" stroke-width="0.8"/><path d="M1266 790H1274M1270 786H1278" stroke="#9098c0" stroke-width="2"/>
<ellipse cx="1290.7" cy="784" rx="8" ry="7.8" fill="#70c040"/><path d="M1286.5 784L1289.5 787L1295 780.5" stroke="#ffffff" stroke-width="2.4" fill="none"/>
<defs>
<radialGradient id="ballB" cx="0.35" cy="0.35" r="0.7"><stop offset="0" stop-color="#b8c4ff"/><stop offset="0.45" stop-color="#4a5cf0"/><stop offset="1" stop-color="#1a1ab8"/></radialGradient>
<radialGradient id="ballR" cx="0.35" cy="0.35" r="0.7"><stop offset="0" stop-color="#ffd0d0"/><stop offset="0.45" stop-color="#e84848"/><stop offset="1" stop-color="#b01818"/></radialGradient>
<linearGradient id="wedgeG" x1="0" y1="1" x2="1" y2="0"><stop offset="0" stop-color="#1a28d0"/><stop offset="1" stop-color="#8c9cf4"/></linearGradient>
<linearGradient id="docG" x1="0" y1="0" x2="1" y2="0"><stop offset="0" stop-color="#ffffff"/><stop offset="1" stop-color="#d4d4dc"/></linearGradient>
<linearGradient id="wbtn" x1="0" y1="0" x2="0" y2="1"><stop offset="0" stop-color="#fcfcfe"/><stop offset="0.6" stop-color="#e4e4ee"/><stop offset="1" stop-color="#b8b8cc"/></linearGradient>
<linearGradient id="wclose" x1="0" y1="0" x2="0" y2="1"><stop offset="0" stop-color="#f8b090"/><stop offset="0.4" stop-color="#e86848"/><stop offset="1" stop-color="#d04830"/></linearGradient>
<linearGradient id="combB" x1="0" y1="0" x2="0" y2="1"><stop offset="0" stop-color="#f0f2f8"/><stop offset="1" stop-color="#c4ccdc"/></linearGradient>
</defs>
<rect x="2" y="4" width="16" height="17" fill="#ffffff"/>
<path d="M2.5 20V5.5Q3 4 8 4H17" stroke="#2050f0" stroke-width="1.5" fill="none"/>
<rect x="16.5" y="4" width="1.5" height="13" fill="#101010"/>
<rect x="2" y="17" width="16" height="4" fill="#f8a020"/><rect x="4" y="17.5" width="13" height="1.2" fill="#ffe040"/>
<path d="M3.5 21V15L5 11L6.5 15V21" stroke="#c01010" stroke-width="1.6" fill="none"/>
<path d="M6 8Q8 6 10 7" stroke="#1030e0" stroke-width="1.6" fill="none"/><path d="M12 8Q10.5 10 12.5 12" stroke="#101010" stroke-width="1.5" fill="none"/><circle cx="15" cy="7" r="0.9" fill="#101010"/><circle cx="15" cy="11" r="0.9" fill="#303030"/><circle cx="13.5" cy="13" r="0.8" fill="#404040"/><circle cx="8" cy="13" r="1.1" fill="#1030d0"/>
<rect x="1278.5" y="2.5" width="19.5" height="21" rx="3" fill="url(#wbtn)" stroke="#4a4a6e" stroke-width="1"/>
<rect x="1300.5" y="2.5" width="19.5" height="21" rx="3" fill="url(#wbtn)" stroke="#4a4a6e" stroke-width="1"/>
<rect x="1283" y="16" width="7" height="3" fill="#303044"/>
<path d="M1309 9.5H1314.5V14" stroke="#303044" stroke-width="1.8" fill="none"/><rect x="1305.5" y="11.5" width="6.5" height="6" fill="none" stroke="#303044" stroke-width="1.8"/>
<rect x="1323.5" y="2.5" width="20.5" height="21" rx="3" fill="url(#wclose)" stroke="#a02010" stroke-width="1"/>
<path d="M1329 7.5L1338.5 18M1338.5 7.5L1329 18" stroke="#ffffff" stroke-width="2.2"/>
<rect x="1324" y="57" width="14" height="14.5" rx="2" fill="#e04838"/><path d="M1327.5 60.5L1334.5 68M1334.5 60.5L1327.5 68" stroke="#fff" stroke-width="2"/>
<path d="M126.5 57.5H134.0V71.5H123.5V60.5Z" fill="url(#docG)" stroke="#1414e0" stroke-width="1.6"/><path d="M123.5 60.5H126.5V57.5" fill="none" stroke="#1414e0" stroke-width="1"/>
<path d="M154 55.5H162.5V69.5H151V58.5Z" fill="url(#docG)" stroke="#1414e0" stroke-width="1.6"/><path d="M151 58.5H154V55.5" fill="none" stroke="#1414e0" stroke-width="1"/>
<path d="M148.5 60H156.5V73.5H145.5V63Z" fill="url(#docG)" stroke="#1414e0" stroke-width="1.6"/><path d="M145.5 63H148.5V60" fill="none" stroke="#1414e0" stroke-width="1"/>
<path d="M171.5 62.5H176L177.5 61H185V72H171.5Z" fill="#f0a0a0" stroke="#c81010" stroke-width="1.4"/><path d="M171.5 72L173.5 66H187L185 72Z" fill="#e05050" stroke="#c81010" stroke-width="1.2"/>
<path d="M182.5 62L188.5 56" stroke="#1414e0" stroke-width="1.6"/><path d="M185 55.5H189V59.5" stroke="#1414e0" stroke-width="1.6" fill="none"/>
<rect x="199.5" y="57.5" width="13" height="14" fill="#e8eaf8" stroke="#1414e0" stroke-width="1.6"/><rect x="199.5" y="66" width="13" height="6" fill="#1414e0"/><rect x="208" y="67" width="2" height="3.5" fill="#ffffff"/><path d="M203 59.5h2M206.5 59.5h2M204.5 62h2" stroke="#5060c0" stroke-width="1.2"/><rect x="200.5" y="64" width="11" height="1.5" fill="#8090d0"/>
<rect x="227" y="57.5" width="9" height="6" fill="#fff" stroke="#1414e0" stroke-width="1.3"/><path d="M224 63.5H239.5Q241 66 239.5 69H224Q222.5 66 224 63.5Z" fill="#c8d0f8" stroke="#1414e0" stroke-width="1.5"/><path d="M225 67h13" stroke="#e04040" stroke-width="1"/><path d="M225 70.5h13" stroke="#c0a040" stroke-width="1.5"/><path d="M228 60h7M228 62h7" stroke="#5060c0" stroke-width="0.8"/>
<path d="M251 56.5H261L264 59.5V72.5H251Z" fill="#ffffff" stroke="#1414e0" stroke-width="1.5"/><path d="M251.5 58.5H261" stroke="#d02020" stroke-width="2.2"/><path d="M252 72L256.5 61L258 64L263 70M254 67.5H261" stroke="#d02020" stroke-width="1.2" fill="none"/>
<path d="M285 63.5Q286 59 291 59.5Q295.5 61 294 66.5Q293 70 290 72" stroke="#d02020" stroke-width="2.4" fill="none"/><path d="M283.5 60L285 66L289.5 63" stroke="#d02020" stroke-width="2" fill="none"/>
<path d="M320 63.5Q319 59 314 59.5Q309.5 61 311 66.5Q312 70 315 72" stroke="#b8b8c0" stroke-width="2.4" fill="none"/><path d="M321.5 60L320 66L315.5 63" stroke="#b8b8c0" stroke-width="2" fill="none"/>
<path d="M339 68H347V71H338Z" fill="#ffffff"/><path d="M345 63L353 55.5L357.5 57L357 65L350 71Q346 71 345 67Z" fill="#c0c8f0" stroke="#6070b0" stroke-width="0.8"/><path d="M345 64Q344 70 349.5 71L352 66Z" fill="#e03030"/><path d="M346.5 61L354 67.5" stroke="#2030d0" stroke-width="1.6"/>
<path d="M367 57L381 71M381 57L367 71" stroke="#9a9aa4" stroke-width="3.4" stroke-linecap="round"/><path d="M367 57L381 71M381 57L367 71" stroke="#fafafa" stroke-width="1.6" stroke-linecap="round"/>
<rect x="393" y="57" width="8" height="12" fill="#f0f0f4" stroke="#8a8a94"/><rect x="398.5" y="60" width="8" height="12" fill="#f0f0f4" stroke="#8a8a94"/><path d="M400.5 63h4M400.5 65.5h4M400.5 68h4" stroke="#707078" stroke-width="1"/>
<rect x="417.5" y="56.5" width="11" height="15.5" rx="1" fill="#d8d8de" stroke="#9a9aa4"/><rect x="420.5" y="54.5" width="5" height="3" fill="#e8e8ec" stroke="#9a9aa4"/><rect x="424.5" y="61.5" width="9.5" height="11.5" fill="#f4f4f6" stroke="#9a9aa4"/><path d="M426.5 64.5h6M426.5 67h6M426.5 69.5h6" stroke="#8a8a94" stroke-width="1"/>
<circle cx="456.3" cy="61.8" r="4.8" fill="#ffffff" stroke="#1414e0" stroke-width="1.7"/><path d="M453.8 61.8h5M456.3 59.3v5" stroke="#1414e0" stroke-width="1.5"/><path d="M460 65.5L464.5 70" stroke="#3050e8" stroke-width="2.6" stroke-linecap="round"/>
<circle cx="482.3" cy="61.8" r="4.8" fill="#ffffff" stroke="#1414e0" stroke-width="1.7"/><path d="M479.8 61.8h5" stroke="#1414e0" stroke-width="1.5"/><path d="M486 65.5L490.5 70" stroke="#3050e8" stroke-width="2.6" stroke-linecap="round"/>
<path d="M470.5 66.5V76H461.5Z" fill="#ffffff" stroke="#a8b8e0" stroke-width="1"/>
<rect x="508.5" y="54.5" width="65.5" height="22" fill="#ffffff" stroke="#7f9db9"/>
<rect x="557.5" y="55.5" width="16" height="20" fill="url(#combB)" stroke="#b0b8d0" stroke-width="0.8"/><path d="M562 63L565.5 66.5L569 63" stroke="#101010" stroke-width="2.2" fill="none"/>
<text x="510.40" y="69.20" font-family="Liberation Sans" font-size="12" font-weight="normal" font-style="normal" fill="#101010" textLength="26.12" lengthAdjust="spacingAndGlyphs">150%</text>
<rect x="590.5" y="53.5" width="14" height="19.5" fill="none" stroke="#2828e0" stroke-width="1.1"/><circle cx="594" cy="57.5" r="2" fill="url(#ballR)"/><circle cx="599.5" cy="62" r="3.3" fill="url(#ballB)"/>
<path d="M614 73.5V57.5H632.5V73.5" fill="none" stroke="#2828e0" stroke-width="1.1"/><circle cx="618.5" cy="62" r="2.8" fill="url(#ballR)"/><circle cx="625.5" cy="70" r="4" fill="url(#ballB)"/>
<circle cx="644.5" cy="58.6" r="3.5" fill="url(#ballR)"/><circle cx="652" cy="66" r="4.8" fill="url(#ballB)"/>
<rect x="689.5" y="55.5" width="6.5" height="3.5" rx="0.8" fill="#ffffff" stroke="#2020d8" stroke-width="1.1"/>
<rect x="698.0" y="55.5" width="6.5" height="3.5" rx="0.8" fill="#ffffff" stroke="#2020d8" stroke-width="1.1"/>
<rect x="706.5" y="55.5" width="6.5" height="3.5" rx="0.8" fill="#ffffff" stroke="#2020d8" stroke-width="1.1"/>
<rect x="689.5" y="60.3" width="6.5" height="3.5" rx="0.8" fill="#ffffff" stroke="#2020d8" stroke-width="1.1"/>
<rect x="698.0" y="60.3" width="6.5" height="3.5" rx="0.8" fill="#ffffff" stroke="#2020d8" stroke-width="1.1"/>
<rect x="706.5" y="60.3" width="6.5" height="3.5" rx="0.8" fill="#ffffff" stroke="#2020d8" stroke-width="1.1"/>
<rect x="689.5" y="65.1" width="6.5" height="3.5" rx="0.8" fill="#ffffff" stroke="#2020d8" stroke-width="1.1"/>
<rect x="698.0" y="65.1" width="6.5" height="3.5" rx="0.8" fill="#ffffff" stroke="#2020d8" stroke-width="1.1"/>
<rect x="706.5" y="65.1" width="6.5" height="3.5" rx="0.8" fill="#ffffff" stroke="#2020d8" stroke-width="1.1"/>
<rect x="676.5" y="56.5" width="17.5" height="16.5" fill="#fff8f8" stroke="#c81818" stroke-width="1.6"/><rect x="694" y="60" width="3" height="9" fill="#f0c0c0" stroke="#c81818" stroke-width="1"/><path d="M679 70Q682 63 685 66Q688 68 691.5 59.5" stroke="#1818c8" stroke-width="1.1" fill="none"/><path d="M686 70.5h4" stroke="#c81818" stroke-width="1"/>
<path d="M731.5 55.5H741L745.5 60V73.5H731.5Z" fill="#f4f4fc" stroke="#1818c0" stroke-width="1.3"/><circle cx="734.5" cy="66" r="5" fill="#ffffff" fill-opacity="0.5" stroke="#2020e0" stroke-width="1.6"/><path d="M737.5 70L740.5 73" stroke="#2020e0" stroke-width="2"/><circle cx="738" cy="61" r="2.5" fill="none" stroke="#d03030" stroke-width="1"/><path d="M738 63.5v5M741 63l2 2" stroke="#d03030" stroke-width="1"/>
<path d="M762 59.5L765 55.5L768 59.5L771 55.5L774 59.5L777.5 55.5" stroke="#d02020" stroke-width="1.1" fill="none"/><path d="M769.5 59V65" stroke="#1818c0" stroke-width="2.4"/><path d="M766 64L769.5 68L773 64Z" fill="#1818c0"/><path d="M763.5 66.5V73.5H776.5V66.5" fill="#ffffff" stroke="#101060" stroke-width="1.5"/><path d="M766.5 70.5h7" stroke="#101060" stroke-width="1"/>
<rect x="786.5" y="57.5" width="22" height="11" fill="#f8f0d0"/>
<text x="787.60" y="67.40" font-family="Liberation Sans" font-size="12" font-weight="bold" font-style="normal" fill="#1818d8" textLength="20.33" lengthAdjust="spacingAndGlyphs">InChI</text>
<ellipse cx="832" cy="64.5" rx="10" ry="4.5" transform="rotate(-50 832 64.5)" fill="none" stroke="#d02020" stroke-width="1.3"/><circle cx="830" cy="65" r="4.5" fill="url(#ballB)"/><circle cx="836.5" cy="69" r="3.5" fill="url(#ballB)"/><circle cx="826" cy="58" r="3" fill="url(#ballR)"/><circle cx="829" cy="56.5" r="2" fill="#ffffff"/>
<rect x="862" y="57" width="9.5" height="15" rx="3" fill="#30b030" stroke="#101010" stroke-width="1.1"/><rect x="864.5" y="55" width="4.5" height="3" fill="#208020" stroke="#101010" stroke-width="0.8"/><rect x="865.5" y="64" width="3" height="8" fill="#40b0e0"/>
<text x="875.90" y="68.40" font-family="Liberation Serif" font-size="12" font-weight="normal" font-style="normal" fill="#207868" textLength="20.64" lengthAdjust="spacingAndGlyphs" stroke="#207868" stroke-width="0.3">LogP</text>
<text x="909.30" y="68.50" font-family="Liberation Sans" font-size="11" font-weight="bold" font-style="normal" fill="#207878" textLength="18.25" lengthAdjust="spacingAndGlyphs">Pub</text>
<path d="M934 57.5L939.5 60.8V67.5L934 70.8L928.5 67.5V60.8Z" fill="none" stroke="#808088" stroke-width="1"/><path d="M936.8 61.5Q934 60.5 932 62.5Q930.8 64.2 932 66.3Q934 68 936.8 67" fill="none" stroke="#404048" stroke-width="1.1"/>
<text x="939.80" y="68.50" font-family="Liberation Sans" font-size="11" font-weight="bold" font-style="normal" fill="#207878" textLength="17.03" lengthAdjust="spacingAndGlyphs">hem</text>
<text x="962.90" y="68.50" font-family="Liberation Sans" font-size="11" font-weight="bold" font-style="normal" fill="#a02828" textLength="5.91" lengthAdjust="spacingAndGlyphs">e</text>
<text x="969.50" y="68.50" font-family="Liberation Sans" font-size="11" font-weight="bold" font-style="normal" fill="#2a5050" textLength="9.16" lengthAdjust="spacingAndGlyphs">M</text>
<path d="M985 57.5L990.5 60.8V67.5L985 70.8L979.5 67.5V60.8Z" fill="none" stroke="#808088" stroke-width="1"/><circle cx="985" cy="64.2" r="3" fill="none" stroke="#505058" stroke-width="1"/>
<text x="991.00" y="68.50" font-family="Liberation Sans" font-size="11" font-weight="bold" font-style="normal" fill="#207878" textLength="22.07" lengthAdjust="spacingAndGlyphs">lecules</text>
<g stroke="#5078b0" stroke-width="1.6" fill="none"><rect x="1024" y="59" width="8" height="8.5" transform="rotate(45 1028 63.2)"/><rect x="1026" y="61.2" width="4" height="4" fill="#5078b0" stroke="none"/><path d="M1021 56L1024.5 59.5M1035 56L1031.5 59.5M1021 70.5L1024.5 67M1035 70.5L1031.5 67M1028 53.5V57M1028 69.5V73.5M1020.5 63.2H1023M1033 63.2H1035.5"/></g>
<text x="1036.40" y="68.40" font-family="Liberation Sans" font-size="12" font-weight="normal" font-style="normal" fill="#3a64a8" textLength="36.80" lengthAdjust="spacingAndGlyphs" stroke="#3a64a8" stroke-width="0.35">ChemSpider</text>
<path d="M1089.5 68.5h5.5M1089.5 70.5h5.5L1092.25 74Z" stroke="#101010" stroke-width="1" fill="#101010"/>
<path d="M866 101h5.5M866 103h5.5L868.75 106.5Z" stroke="#101010" stroke-width="1" fill="#101010"/>
<rect x="83.5" y="85" width="1" height="22" fill="#a8bce4"/>
<rect x="117.5" y="85" width="1" height="22" fill="#a8bce4"/>
<rect x="202.5" y="85" width="1" height="22" fill="#a8bce4"/>
<rect x="313.5" y="85" width="1" height="22" fill="#a8bce4"/>
<rect x="372.5" y="85" width="1" height="22" fill="#a8bce4"/>
<rect x="509.5" y="85" width="1" height="22" fill="#a8bce4"/>
<rect x="542.5" y="85" width="1" height="22" fill="#a8bce4"/>
<rect x="576.5" y="85" width="1" height="22" fill="#a8bce4"/>
<rect x="661.5" y="85" width="1" height="22" fill="#a8bce4"/>
<rect x="721" y="85" width="1" height="22" fill="#a8bce4"/>
<rect x="754.5" y="85" width="1" height="22" fill="#a8bce4"/>
<circle cx="14.7" cy="96.3" r="4.6" fill="url(#ballB)"/><path d="M17 98L22.5 104" stroke="#c01818" stroke-width="2"/><path d="M16.5 97.5L21.5 98.5L17.5 102Z" fill="#c01818"/>
<circle cx="40.6" cy="96.3" r="4.8" fill="url(#ballB)"/><path d="M45 89Q50 94 47 101Q42 106 35.5 102.5" stroke="#d02020" stroke-width="1.6" fill="none"/><path d="M42 88.5H47.5" stroke="#d02020" stroke-width="1.6"/><path d="M33 99.5L35 104.5" stroke="#d02020" stroke-width="1.4"/>
<circle cx="65.5" cy="96.3" r="4.5" fill="url(#ballB)"/><ellipse cx="65.5" cy="96.5" rx="8" ry="3.2" transform="rotate(-40 65.5 96.5)" fill="none" stroke="#d02020" stroke-width="1.4"/><path d="M66 97L71 99L67 101Z" fill="#d02020"/>
<rect x="91.5" y="87.5" width="11.5" height="11.5" fill="#ffffff" stroke="#1414e0" stroke-width="1.5"/><path d="M104 100L109.5 106" stroke="#c01818" stroke-width="2"/><path d="M103.5 99.5L108.5 100.5L104.5 104Z" fill="#c01818"/>
<path d="M126 99.8H136" stroke="#d01818" stroke-width="2"/><path d="M136.00 98.50L139.66 97.03L145.74 87.43L141.86 84.97L135.77 94.57Z" fill="#1414e0"/><path d="M138.90 95.60L143.92 87.70L142.40 86.73L137.38 94.64Z" fill="#f0f4ff"/>
<path d="M151 99.8H161.5" stroke="#1414e0" stroke-width="2"/><path d="M161 99.5L166.5 106.5" stroke="#d01818" stroke-width="1.6"/><path d="M161.50 98.50L165.13 96.97L170.96 87.40L167.04 85.00L161.20 94.57Z" fill="#1414e0"/><path d="M164.35 95.55L169.14 87.69L167.61 86.76L162.81 94.62Z" fill="#f0f4ff"/>
<path d="M175.5 95.5L178.6 99.4" stroke="#1414e0" stroke-width="1.5"/><path d="M178.6 99.4L182.2 94.8L186 99.4" stroke="#d01818" stroke-width="1.5" fill="none"/><path d="M186.80 98.50L190.44 96.99L196.36 87.41L192.44 84.99L186.53 94.57Z" fill="#1414e0"/><path d="M189.67 95.57L194.53 87.69L193.00 86.75L188.14 94.62Z" fill="#f0f4ff"/>
<path d="M211 99.5L226.7 88.2L216 104.7Z" fill="url(#wedgeG)"/>
<path d="M235.32 99.82L241.68 106.18M238.53 97.63L243.87 102.97M241.74 95.44L246.06 99.76M244.95 93.25L248.25 96.55M248.15 91.05L250.45 93.35M251.36 88.86L252.64 90.14" stroke="#1414e0" stroke-width="1.4"/>
<path d="M263.5 103.5L275.5 90.5" stroke="#1414e0" stroke-width="1.3"/><path d="M277 89L271 91.5L274.5 95Z" fill="#1414e0"/><path d="M282.5 100.5V109.5H273.5Z" fill="#ffffff" stroke="#b0c0e8" stroke-width="1"/>
<path d="M289.5 103L303.5 89" stroke="#1414e0" stroke-width="1.3"/><path d="M289 99L293 103M292 96L296 100M295 93L299 97M298 90L302 94" stroke="#1414e0" stroke-width="1.4"/><path d="M308.5 100.5V109.5H299.5Z" fill="#ffffff" stroke="#b0c0e8" stroke-width="1"/>
<path d="M319.5 94.5L329 88.8L338.7 94.5" stroke="#2828d8" stroke-width="1.6" fill="none"/><path d="M322 96.5Q329 92 336 96.5" stroke="#d02020" stroke-width="1.5" fill="none"/><path d="M326.5 101.8h5M329 99.3v5M327.2 100l3.6 3.6M330.8 100l-3.6 3.6" stroke="#d02020" stroke-width="1"/><path d="M342.5 100.5V109.5H333.5Z" fill="#ffffff" stroke="#b0c0e8" stroke-width="1"/>
<path d="M352.8 89.5L359 93V100.5L352.8 104L346.5 100.5V93Z" fill="none" stroke="#1414e0" stroke-width="1.3"/><path d="M351.5 97H363.5" stroke="#d02020" stroke-width="1.2"/><path d="M361 95L364 97L361 99Z" fill="#d02020"/><circle cx="351.5" cy="97" r="1.1" fill="#d02020"/><path d="M368 100.5V109.5H359Z" fill="#ffffff" stroke="#b0c0e8" stroke-width="1"/>
<path d="M383 96.8H395M389 90.8V102.8" stroke="#c81818" stroke-width="2.4"/>
<path d="M407 104L420 90.5" stroke="#c81818" stroke-width="1.6"/><path d="M422.5 88.2L415.5 90.5L420 95Z" fill="#c81818"/><path d="M427.8 100.5V109.5H418.8Z" fill="#ffffff" stroke="#b0c0e8" stroke-width="1"/>
<path d="M432.5 104L446 90.5" stroke="#1414e0" stroke-width="1.6"/><path d="M448 88.2L441 90.5L445.5 95Z" fill="#1414e0"/><path d="M435.3 89.5L438.2 95H432.4Z" fill="none" stroke="#d02020" stroke-width="1.3"/><path d="M441.5 99v6M445.5 99v6M441.5 102h4M447 100.5h2.5M448.25 99.3v2.5" stroke="#d02020" stroke-width="1.3"/>
<path d="M458.5 90.8H471" stroke="#d02020" stroke-width="1.6"/><path d="M474 90.8L470 88.5V93Z" fill="#d02020"/><rect x="459.5" y="94.5" width="13.5" height="10" fill="#ffffff" stroke="#1414e0" stroke-width="1.3"/><rect x="460" y="95" width="12.5" height="2.5" fill="#30c0f0"/><path d="M460 100.5H472.5M464 97.5V104.5M468.5 97.5V104.5" stroke="#a09060" stroke-width="0.9"/>
<text x="481.90" y="100.80" font-family="Liberation Sans" font-size="13" font-weight="normal" font-style="normal" fill="#1818e0" textLength="4.61" lengthAdjust="spacingAndGlyphs">a</text>
<text x="497.00" y="100.80" font-family="Liberation Sans" font-size="13" font-weight="normal" font-style="normal" fill="#1818e0" textLength="4.61" lengthAdjust="spacingAndGlyphs">a</text>
<path d="M488 97h5" stroke="#d02020" stroke-width="1.3"/><path d="M495.5 97L492.5 95V99Z" fill="#d02020"/>
<path d="M520 89.7H517.3V101H520M524 89.7H527V101H524" stroke="#1818e0" stroke-width="1.6" fill="none"/>
<text x="528.80" y="104.00" font-family="Liberation Sans" font-size="9" font-weight="bold" font-style="normal" fill="#c81818" textLength="5.83" lengthAdjust="spacingAndGlyphs">n</text>
<path d="M551.5 91L563 104M554.5 89L566 102M551 94.5L561 105.5" stroke="#1414e0" stroke-width="1.3"/><ellipse cx="559" cy="97" rx="9" ry="3.8" transform="rotate(-50 559 97)" fill="none" stroke="#d02020" stroke-width="1.4"/><path d="M560 97L565 94L562.5 99.5Z" fill="#d02020"/>
<path d="M585.5 89.5H601" stroke="#5060e0" stroke-width="2.8"/><path d="M586 89.5H601" stroke="#c0c8f8" stroke-width="0.8"/><path d="M586 94L597.5 105.5" stroke="#5060e0" stroke-width="2.8"/><path d="M586.5 94L597.5 105" stroke="#c0c8f8" stroke-width="0.8"/><path d="M596 101Q599 98 598.5 94.5" stroke="#d02020" stroke-width="1.3" fill="none"/><path d="M598.5 92.5L596.5 95.5H600.5Z" fill="#d02020"/>
<path d="M612 89V105.5" stroke="#5060e0" stroke-width="2.8"/><path d="M612 89.5V105" stroke="#c0c8f8" stroke-width="0.8"/><path d="M616 104.5L627.5 94" stroke="#5060e0" stroke-width="2.8"/><path d="M616.5 104L627 94.5" stroke="#c0c8f8" stroke-width="0.8"/><path d="M616 90Q621 89 623 93" stroke="#d02020" stroke-width="1.3" fill="none"/><path d="M615 90L618 88V92Z" fill="#d02020"/>
<path d="M635.5 98.5H648M643 95V105.5M643 98.5L651 90" stroke="#5060e0" stroke-width="2.6"/><path d="M636 98.5H647M643 96V105" stroke="#c0c8f8" stroke-width="0.7"/><ellipse cx="645" cy="96" rx="4.2" ry="5" fill="none" stroke="#d02020" stroke-width="1.3"/><path d="M641 93L644 91L643 95Z" fill="#d02020"/>
<path d="M670 96.5H687" stroke="#4a58e8" stroke-width="2.5"/><path d="M672 96.5H686" stroke="#d0d8ff" stroke-width="0.7"/><path d="M669 96.5L672 94V99Z" fill="#1414e0"/><ellipse cx="678.6" cy="96.5" rx="3.8" ry="7.4" fill="none" stroke="#d02020" stroke-width="1.3"/><path d="M675 98.5L677 93.5L679 98.5Z" fill="#d02020"/>
<path d="M704.6 88V105.8" stroke="#4a58e8" stroke-width="2.5"/><path d="M704.6 90V104" stroke="#d0d8ff" stroke-width="0.7"/><ellipse cx="704.6" cy="96.5" rx="7.6" ry="4" fill="none" stroke="#d02020" stroke-width="1.3"/><path d="M702.5 93.5L707.5 95.5L702.5 97.5Z" fill="#d02020"/>
<g fill="none" stroke="#c81818" stroke-width="1.3"><rect x="735.5" y="89.5" width="9" height="8.5"/><path d="M735.5 89.5L737.5 87.5H746.5V96L744.5 98M744.5 89.5L746.5 87.5"/><rect x="738" y="92" width="4" height="3.5" stroke-width="0.8"/></g>
<g fill="none" stroke="#1414e0" stroke-width="1.5"><rect x="728.5" y="97.5" width="9" height="8.5"/><path d="M728.5 97.5L730.5 95.5H739.5V104L737.5 106M737.5 97.5L739.5 95.5"/><rect x="731" y="100" width="4" height="3.5" stroke-width="0.8"/></g>
<circle cx="770.8" cy="96.4" r="8.3" fill="#d02020"/><circle cx="770.8" cy="96.4" r="7" fill="none" stroke="#f4a0a0" stroke-width="0.8"/><path d="M766 99Q765.5 93 771 92.5" stroke="#ffffff" stroke-width="2" fill="none"/><path d="M770 90L774 92.5L770 95Z" fill="#ffffff"/><path d="M775.5 94Q776 100 770.5 100.5" stroke="#ffffff" stroke-width="2" fill="none"/><path d="M771.5 98L767.5 100.5L771.5 103Z" fill="#ffffff"/>
<path d="M792.5 88V94.5M797 88V94.5M792.5 91.2H797" stroke="#c81818" stroke-width="1.6"/><path d="M790 97.3H804" stroke="#1414e0" stroke-width="1.4"/><path d="M805.5 97.3L801.5 95V99.6Z" fill="#1414e0"/><path d="M793 102H802" stroke="#1414e0" stroke-width="1.4"/><path d="M791.5 102L795.5 99.7V104.3Z" fill="#1414e0"/>
<path d="M822 90V98.2M822 98.2L817.5 103M822 98.2L828.5 101.5M822 98.2L818 96.9" stroke="#1414e0" stroke-width="1.6"/><circle cx="822.3" cy="89.9" r="2.8" fill="url(#ballR)"/><circle cx="817.5" cy="96.9" r="2" fill="url(#ballB)"/><circle cx="817.3" cy="102.9" r="2.8" fill="url(#ballB)"/><circle cx="828.4" cy="101.5" r="2.8" fill="url(#ballB)"/>
<g stroke="#8a8a90" stroke-width="1" fill="none"><path d="M848.5 87V97"/><path d="M842 91L852 103M855 91L845 103"/><circle cx="843.5" cy="104" r="2.2"/><circle cx="853.5" cy="104" r="2.2"/><path d="M842 93L844 90M855 93L853 90"/></g>
<rect x="5.5" y="123.5" width="3.1" height="3.1" fill="#ffffff" stroke="#1010c0" stroke-width="1.1"/>
<rect x="21.0" y="123.5" width="3.1" height="3.1" fill="#ffffff" stroke="#1010c0" stroke-width="1.1"/>
<rect x="5.5" y="126.6" width="3.1" height="3.1" fill="#ffffff" stroke="#1010c0" stroke-width="1.1"/>
<rect x="21.0" y="126.6" width="3.1" height="3.1" fill="#ffffff" stroke="#1010c0" stroke-width="1.1"/>
<rect x="5.5" y="129.7" width="3.1" height="3.1" fill="#ffffff" stroke="#1010c0" stroke-width="1.1"/>
<rect x="8.6" y="129.7" width="3.1" height="3.1" fill="#ffffff" stroke="#1010c0" stroke-width="1.1"/>
<rect x="11.7" y="129.7" width="3.1" height="3.1" fill="#ffffff" stroke="#1010c0" stroke-width="1.1"/>
<rect x="14.8" y="129.7" width="3.1" height="3.1" fill="#ffffff" stroke="#1010c0" stroke-width="1.1"/>
<rect x="17.9" y="129.7" width="3.1" height="3.1" fill="#ffffff" stroke="#1010c0" stroke-width="1.1"/>
<rect x="21.0" y="129.7" width="3.1" height="3.1" fill="#ffffff" stroke="#1010c0" stroke-width="1.1"/>
<rect x="5.5" y="132.8" width="3.1" height="3.1" fill="#ffffff" stroke="#1010c0" stroke-width="1.1"/>
<rect x="8.6" y="132.8" width="3.1" height="3.1" fill="#ffffff" stroke="#1010c0" stroke-width="1.1"/>
<rect x="11.7" y="132.8" width="3.1" height="3.1" fill="#ffffff" stroke="#1010c0" stroke-width="1.1"/>
<rect x="14.8" y="132.8" width="3.1" height="3.1" fill="#ffffff" stroke="#1010c0" stroke-width="1.1"/>
<rect x="17.9" y="132.8" width="3.1" height="3.1" fill="#ffffff" stroke="#1010c0" stroke-width="1.1"/>
<rect x="21.0" y="132.8" width="3.1" height="3.1" fill="#ffffff" stroke="#1010c0" stroke-width="1.1"/>
<rect x="5.5" y="135.9" width="3.1" height="3.1" fill="#ffffff" stroke="#1010c0" stroke-width="1.1"/>
<rect x="8.6" y="135.9" width="3.1" height="3.1" fill="#ffffff" stroke="#1010c0" stroke-width="1.1"/>
<rect x="11.7" y="135.9" width="3.1" height="3.1" fill="#ffffff" stroke="#1010c0" stroke-width="1.1"/>
<rect x="14.8" y="135.9" width="3.1" height="3.1" fill="#ffffff" stroke="#1010c0" stroke-width="1.1"/>
<rect x="17.9" y="135.9" width="3.1" height="3.1" fill="#ffffff" stroke="#1010c0" stroke-width="1.1"/>
<rect x="5.5" y="129.7" width="18.6" height="3.1" fill="none" stroke="#1010c0" stroke-width="1.1"/>
<rect x="10.2" y="118.6" width="8.6" height="8.8" fill="#ffffff" stroke="#c81818" stroke-width="1.2"/>
<text x="11.80" y="125.50" font-family="Liberation Sans" font-size="7" font-weight="bold" font-style="normal" fill="#1010a0" textLength="5.15" lengthAdjust="spacingAndGlyphs">Li</text>
<text x="10.50" y="160.00" font-family="Liberation Serif" font-size="14" font-weight="bold" font-style="normal" fill="#1818b8" textLength="8.27" lengthAdjust="spacingAndGlyphs" stroke="#1818b8" stroke-width="0.2">A</text>
<text x="5.00" y="185.80" font-family="Liberation Serif" font-size="11" font-weight="bold" font-style="normal" fill="#1818b8" textLength="19.50" lengthAdjust="spacingAndGlyphs" stroke="#1818b8" stroke-width="0.2">Any</text>
<text x="10.50" y="213.80" font-family="Liberation Serif" font-size="14" font-weight="bold" font-style="normal" fill="#1818b8" textLength="9.10" lengthAdjust="spacingAndGlyphs" stroke="#1818b8" stroke-width="0.2">C</text>
<text x="10.25" y="238.80" font-family="Liberation Serif" font-size="14" font-weight="bold" font-style="normal" fill="#1818b8" textLength="9.40" lengthAdjust="spacingAndGlyphs" stroke="#1818b8" stroke-width="0.2">H</text>
<text x="10.25" y="264.00" font-family="Liberation Serif" font-size="14" font-weight="bold" font-style="normal" fill="#1818b8" textLength="9.60" lengthAdjust="spacingAndGlyphs" stroke="#1818b8" stroke-width="0.2">N</text>
<text x="10.50" y="289.00" font-family="Liberation Serif" font-size="14" font-weight="bold" font-style="normal" fill="#1818b8" textLength="8.91" lengthAdjust="spacingAndGlyphs" stroke="#1818b8" stroke-width="0.2">O</text>
<text x="11.25" y="314.00" font-family="Liberation Serif" font-size="14" font-weight="bold" font-style="normal" fill="#1818b8" textLength="8.02" lengthAdjust="spacingAndGlyphs" stroke="#1818b8" stroke-width="0.2">F</text>
<text x="7.50" y="338.00" font-family="Liberation Serif" font-size="14" font-weight="bold" font-style="normal" fill="#1818b8" textLength="15.00" lengthAdjust="spacingAndGlyphs" stroke="#1818b8" stroke-width="0.2">Na</text>
<text x="9.50" y="364.50" font-family="Liberation Serif" font-size="14" font-weight="bold" font-style="normal" fill="#1818b8" textLength="10.90" lengthAdjust="spacingAndGlyphs" stroke="#1818b8" stroke-width="0.2">Si</text>
<text x="11.00" y="389.50" font-family="Liberation Serif" font-size="14" font-weight="bold" font-style="normal" fill="#1818b8" textLength="7.60" lengthAdjust="spacingAndGlyphs" stroke="#1818b8" stroke-width="0.2">P</text>
<text x="11.25" y="414.00" font-family="Liberation Serif" font-size="14" font-weight="bold" font-style="normal" fill="#1818b8" textLength="7.30" lengthAdjust="spacingAndGlyphs" stroke="#1818b8" stroke-width="0.2">S</text>
<text x="9.00" y="439.00" font-family="Liberation Serif" font-size="14" font-weight="bold" font-style="normal" fill="#1818b8" textLength="11.91" lengthAdjust="spacingAndGlyphs" stroke="#1818b8" stroke-width="0.2">Cl</text>
<text x="10.25" y="464.00" font-family="Liberation Serif" font-size="14" font-weight="bold" font-style="normal" fill="#1818b8" textLength="9.40" lengthAdjust="spacingAndGlyphs" stroke="#1818b8" stroke-width="0.2">K</text>
<text x="8.50" y="489.00" font-family="Liberation Serif" font-size="14" font-weight="bold" font-style="normal" fill="#1818b8" textLength="13.18" lengthAdjust="spacingAndGlyphs" stroke="#1818b8" stroke-width="0.2">Br</text>
<path d="M28 159V168H19Z" fill="#ffffff" stroke="#b0c0e8" stroke-width="1"/>
<path d="M28 183V192H19Z" fill="#ffffff" stroke="#b0c0e8" stroke-width="1"/>
<path d="M28 549V558H19Z" fill="#ffffff" stroke="#b0c0e8" stroke-width="1"/>
<path d="M28 576V585H19Z" fill="#ffffff" stroke="#b0c0e8" stroke-width="1"/>
<rect x="4" y="500" width="22" height="1" fill="#b0c0e0"/>
<rect x="5" y="511" width="13" height="14" fill="#1818c0"/>
<text x="5.50" y="523.00" font-family="Liberation Sans" font-size="13" font-weight="normal" font-style="normal" fill="#ffffff" textLength="12.19" lengthAdjust="spacingAndGlyphs">ab</text>
<text x="18.50" y="523.00" font-family="Liberation Sans" font-size="13" font-weight="normal" font-style="normal" fill="#1818c0" textLength="5.11" lengthAdjust="spacingAndGlyphs">c</text>
<path d="M8.2 539.7H17M15 545.9H21.5M11 548L8.7 554" stroke="#1414c0" stroke-width="2"/><circle cx="19" cy="539.7" r="2.3" fill="#ffffff" stroke="#a09030" stroke-width="1"/><circle cx="12.8" cy="545.9" r="2.3" fill="#ffffff" stroke="#a09030" stroke-width="1"/>
<path d="M11.3 572H19M15.15 568.5V575.6" stroke="#c81818" stroke-width="2"/>
<text x="10.30" y="601.80" font-family="Liberation Sans" font-size="13" font-weight="bold" font-style="normal" fill="#1414c0" textLength="9.11" lengthAdjust="spacingAndGlyphs">A</text>
<text x="7.20" y="595.60" font-family="Liberation Serif" font-size="7" font-weight="bold" font-style="normal" fill="#c81818" textLength="2.27" lengthAdjust="spacingAndGlyphs">I</text>
<text x="19.00" y="595.60" font-family="Liberation Sans" font-size="7" font-weight="bold" font-style="normal" fill="#c81818" textLength="3.63" lengthAdjust="spacingAndGlyphs">Q</text>
<text x="12.80" y="608.50" font-family="Liberation Sans" font-size="7" font-weight="bold" font-style="normal" fill="#c81818" textLength="4.25" lengthAdjust="spacingAndGlyphs">N</text>
<path d="M12.5 620V633M18 620V633M9 624.5H22M8.5 629H21.5" stroke="#1414c0" stroke-width="2.2"/>
<path d="M18.5 645.5V650.5" stroke="#101010" stroke-width="1"/><path d="M20 645.5L23.5 648L20 650.5Z" fill="#101010"/>
<path d="M1315 130L1329 122.5L1336 127L1322 134.5Z" fill="#d8d8f8" stroke="#1414e0" stroke-width="1.6"/><path d="M1315 130V133L1322 137.5L1336 130V127M1322 134.5V137.5" fill="none" stroke="#1414e0" stroke-width="1.6"/><path d="M1322 128.5L1328 125.3L1331 127.2L1325 130.4Z" fill="#404080"/><path d="M1316.5 132.5L1322 135.8" stroke="#f0e080" stroke-width="1"/>
<rect x="1310" y="146.5" width="30" height="1" fill="#a8bce0"/>
<rect x="1310.8" y="159.5" width="5.6" height="3.4" rx="0.5" fill="#ffffff" stroke="#1414c0" stroke-width="1.1"/>
<rect x="1331.5" y="159.5" width="5.6" height="3.4" rx="0.5" fill="#ffffff" stroke="#1414c0" stroke-width="1.1"/>
<rect x="1310.8" y="164.1" width="5.6" height="3.4" rx="0.5" fill="#ffffff" stroke="#1414c0" stroke-width="1.1"/>
<rect x="1317.7" y="164.1" width="5.6" height="3.4" rx="0.5" fill="#ffffff" stroke="#1414c0" stroke-width="1.1"/>
<rect x="1324.6" y="164.1" width="5.6" height="3.4" rx="0.5" fill="#ffffff" stroke="#1414c0" stroke-width="1.1"/>
<rect x="1331.5" y="164.1" width="5.6" height="3.4" rx="0.5" fill="#ffffff" stroke="#1414c0" stroke-width="1.1"/>
<rect x="1310.8" y="168.7" width="5.6" height="3.4" rx="0.5" fill="#ffffff" stroke="#1414c0" stroke-width="1.1"/>
<rect x="1317.7" y="168.7" width="5.6" height="3.4" rx="0.5" fill="#ffffff" stroke="#1414c0" stroke-width="1.1"/>
<rect x="1324.6" y="168.7" width="5.6" height="3.4" rx="0.5" fill="#ffffff" stroke="#1414c0" stroke-width="1.1"/>
<rect x="1331.5" y="168.7" width="5.6" height="3.4" rx="0.5" fill="#ffffff" stroke="#1414c0" stroke-width="1.1"/>
<rect x="1318" y="154.3" width="13" height="8.2" fill="#ffffff" stroke="#c81818" stroke-width="1.2"/>
<text x="1320.00" y="161.00" font-family="Liberation Sans" font-size="7" font-weight="bold" font-style="normal" fill="#1414a0" textLength="6.50" lengthAdjust="spacingAndGlyphs">CF</text>
<path d="M1327.6 159.5h1.8v1.8h-1.8" stroke="#1414a0" stroke-width="0.8" fill="none"/>
<path d="M1325.2 182.3L1333.3 187V196.3L1325.2 201L1317.1 196.3V187Z" fill="none" stroke="#1414c0" stroke-width="1.2"/><path d="M1319.8 188.5V194.8M1322 186L1325.2 184.2L1331 187.6M1331 195.7L1325.2 199" stroke="#1414c0" stroke-width="1" fill="none"/>
<path d="M1325.5 210L1333.5 214.5V223L1325.5 227.5L1317.5 223V214.5Z" fill="none" stroke="#1414c0" stroke-width="1.2"/>
<path d="M1325.5 236.5L1334 243L1331 254.5H1320L1317 243Z" fill="none" stroke="#1414c0" stroke-width="1.2"/>
<text x="1315.80" y="276.50" font-family="Liberation Sans" font-size="12" font-weight="normal" font-style="normal" fill="#2020c8" textLength="20.12" lengthAdjust="spacingAndGlyphs">t-Bu</text>
<text x="1316.50" y="303.50" font-family="Liberation Sans" font-size="12" font-weight="normal" font-style="normal" fill="#2020c8" textLength="18.00" lengthAdjust="spacingAndGlyphs">i-Pr</text>
<text x="1310.50" y="331.00" font-family="Liberation Sans" font-size="12" font-weight="normal" font-style="normal" fill="#2020c8" textLength="23.44" lengthAdjust="spacingAndGlyphs">COCH</text>
<text x="1334.50" y="334.50" font-family="Liberation Sans" font-size="9" font-weight="normal" font-style="normal" fill="#2020c8" textLength="4.50" lengthAdjust="spacingAndGlyphs">3</text>
<text x="1313.00" y="358.70" font-family="Liberation Sans" font-size="12" font-weight="normal" font-style="normal" fill="#2020c8" textLength="23.43" lengthAdjust="spacingAndGlyphs">COOH</text>
<text x="1313.00" y="385.00" font-family="Liberation Sans" font-size="12" font-weight="normal" font-style="normal" fill="#2020c8" textLength="24.51" lengthAdjust="spacingAndGlyphs">COPh</text>
<text x="1317.00" y="412.00" font-family="Liberation Sans" font-size="12" font-weight="normal" font-style="normal" fill="#2020c8" textLength="12.23" lengthAdjust="spacingAndGlyphs">NO</text>
<text x="1330.00" y="415.50" font-family="Liberation Sans" font-size="9" font-weight="normal" font-style="normal" fill="#2020c8" textLength="4.50" lengthAdjust="spacingAndGlyphs">2</text>
<text x="1315.00" y="440.00" font-family="Liberation Sans" font-size="12" font-weight="normal" font-style="normal" fill="#2020c8" textLength="20.00" lengthAdjust="spacingAndGlyphs">OAc</text>
<text x="1313.00" y="468.00" font-family="Liberation Sans" font-size="12" font-weight="normal" font-style="normal" fill="#2020c8" textLength="11.73" lengthAdjust="spacingAndGlyphs">SO</text>
<text x="1325.00" y="471.50" font-family="Liberation Sans" font-size="9" font-weight="normal" font-style="normal" fill="#2020c8" textLength="4.50" lengthAdjust="spacingAndGlyphs">3</text>
<text x="1330.50" y="468.00" font-family="Liberation Sans" font-size="12" font-weight="normal" font-style="normal" fill="#2020c8" textLength="7.04" lengthAdjust="spacingAndGlyphs">H</text>
<text x="1311.00" y="494.00" font-family="Liberation Sans" font-size="12" font-weight="normal" font-style="normal" fill="#2020c8" textLength="11.22" lengthAdjust="spacingAndGlyphs">PO</text>
<text x="1322.50" y="497.50" font-family="Liberation Sans" font-size="9" font-weight="normal" font-style="normal" fill="#2020c8" textLength="4.50" lengthAdjust="spacingAndGlyphs">3</text>
<text x="1328.00" y="494.00" font-family="Liberation Sans" font-size="12" font-weight="normal" font-style="normal" fill="#2020c8" textLength="6.50" lengthAdjust="spacingAndGlyphs">H</text>
<text x="1334.50" y="497.50" font-family="Liberation Sans" font-size="9" font-weight="normal" font-style="normal" fill="#2020c8" textLength="4.50" lengthAdjust="spacingAndGlyphs">2</text>
<path d="M1333.5 506.5V511" stroke="#101010" stroke-width="1"/><path d="M1335 506.5L1338.5 508.7L1335 511Z" fill="#101010"/>
</svg></body></html>
